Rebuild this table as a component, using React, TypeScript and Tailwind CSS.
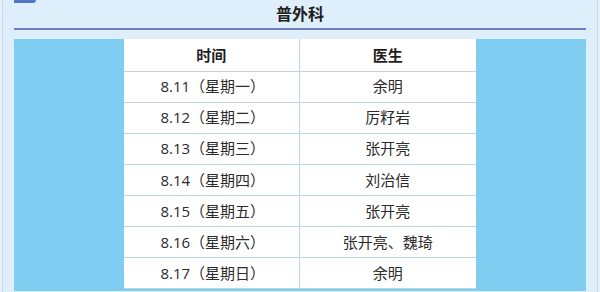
import React from 'react';

const rows: [string, string][] = [
    ['8.11（星期一）', '余明'],
    ['8.12（星期二）', '厉籽岩'],
    ['8.13（星期三）', '张开亮'],
    ['8.14（星期四）', '刘治信'],
    ['8.15（星期五）', '张开亮'],
    ['8.16（星期六）', '张开亮、魏琦'],
    ['8.17（星期日）', '余明'],
];

const App: React.FC = () => {
    return (
        <div className="w-[600px] h-[292px] overflow-hidden bg-[#e6f1fb] px-[2px] font-['Open_Sans','Noto_Sans_CJK_SC',sans-serif] text-[15px] text-[#2b2b2b]">
            <div className="h-full border-x border-[#c6dbef] bg-[#deeefb] px-[11px]">
                {/* heading */}
                <div className="relative h-[30px] border-b-2 border-[#6b7ec3] flex items-center justify-center">
                    <div className="absolute left-0 top-0 w-[22px] h-[3px] rounded-br-[3px] bg-[#5675c4]" />
                    <span className="font-bold text-[16px] text-[#1e1e1e] pb-[1px]">普外科</span>
                </div>

                <div className="mt-[9px] bg-[#7fcdf1] px-[110px] pb-[2px]">
                    <table className="w-full bg-white border-collapse">
                        <thead>
                            <tr className="h-[32px] border-b border-[#b8d8e4]">
                                <th className="w-[175px] border-r border-[#b8d8e4] font-bold text-[#1e1e1e]">时间</th>
                                <th className="font-bold text-[#1e1e1e]">医生</th>
                            </tr>
                        </thead>
                        <tbody>
                            {rows.map(([date, doctor]) => (
                                <tr key={date} className="h-[31.1px] border-b border-[#b8d8e4]">
                                    <td className="border-r border-[#b8d8e4] text-center p-0 pl-[3px]">{date}</td>
                                    <td className="text-center p-0">{doctor}</td>
                                </tr>
                            ))}
                        </tbody>
                    </table>
                </div>
            </div>
        </div>
    );
};

export default App;
